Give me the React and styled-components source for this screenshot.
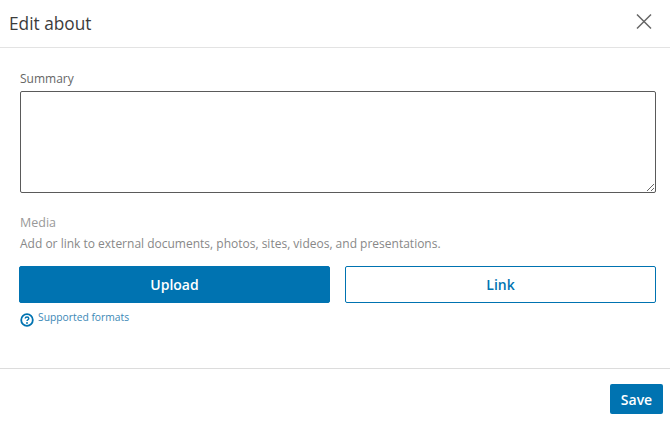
import React from 'react';
import styled, { createGlobalStyle } from 'styled-components';

const GlobalStyle = createGlobalStyle`
html, body {
    margin: 0;
    background: #fff;
    font-family: "Open Sans", "Noto Sans", sans-serif;
}
* {
    box-sizing: border-box;
}
`;

const Modal = styled.div`
width: 670px;
height: 425px;
background: #fff;
display: flex;
flex-direction: column;
overflow: hidden;
`;

const Header = styled.header`
height: 48px;
padding: 0 14px 0 9px;
display: flex;
align-items: center;
justify-content: space-between;
border-bottom: 1px solid #e3e3e3;
`;

const Title = styled.h2`
margin: 0;
font-size: 17.3px;
font-weight: 400;
color: #3c3c3c;
`;

const CloseButton = styled.button`
padding: 0;
width: 24px;
height: 24px;
border: none;
background: none;
color: #666;
margin-top: -3px;
`;

const Body = styled.div`
height: 321px;
padding: 22px 14px 0 20px;
border-bottom: 1px solid #dcdcdc;
`;

const FieldLabel = styled.label`
display: block;
font-size: 12px;
line-height: 17px;
color: #666;
margin-bottom: 4px;
`;

const SummaryInput = styled.textarea`
display: block;
width: 100%;
height: 102px;
border: 1px solid #5a5a5a;
border-radius: 2px;
background: #fff;
margin: 0;
`;

const MediaTitle = styled.div`
margin-top: 21px;
font-size: 12.5px;
line-height: 18px;
color: #999;
`;

const MediaHint = styled.div`
margin-top: 3px;
font-size: 12px;
line-height: 17px;
color: #888;
`;

const ButtonRow = styled.div`
display: grid;
grid-template-columns: 311px 311px;
justify-content: space-between;
margin: 14px 0 0 -1px;
`;

const MediaButton = styled.button`
height: 37px;
border-radius: 2px;
border: 1px solid #0073b1;
background: ${props => props.primary ? '#0073b1' : '#fff'};
color: ${props => props.primary ? '#fff' : '#0073b1'};
font-family: inherit;
font-size: 14px;
font-weight: 600;
`;

const FormatsLink = styled.a`
display: flex;
align-items: flex-start;
gap: 4px;
margin-top: 6px;
font-size: 10.3px;
line-height: 16px;
color: #3c88b6;
`;

const HelpIcon = styled.svg`
width: 14px;
height: 14px;
margin-top: 4px;
flex: none;
`;

const Footer = styled.footer`
flex: 1;
display: flex;
justify-content: flex-end;
align-items: flex-start;
padding: 15px 7px 0 0;
`;

const SaveButton = styled.button`
width: 53px;
height: 30px;
padding: 0;
border: none;
border-radius: 2px;
background: #0073b1;
color: #fff;
font-family: inherit;
font-size: 14px;
font-weight: 600;
`;

function App() {
    return (
        <Modal>
            <GlobalStyle />
            <Header>
                <Title>Edit about</Title>
                <CloseButton aria-label="Close">
                    <svg width="24" height="24" viewBox="0 0 24 24" fill="none" stroke="currentColor" strokeWidth="1.5">
                        <path d="M5 4.5 19 18.5M19 4.5 5 18.5" />
                    </svg>
                </CloseButton>
            </Header>
            <Body>
                <FieldLabel>Summary</FieldLabel>
                <SummaryInput />
                <MediaTitle>Media</MediaTitle>
                <MediaHint>Add or link to external documents, photos, sites, videos, and presentations.</MediaHint>
                <ButtonRow>
                    <MediaButton primary>Upload</MediaButton>
                    <MediaButton>Link</MediaButton>
                </ButtonRow>
                <FormatsLink>
                    <HelpIcon viewBox="0 0 14 14" fill="none">
                        <circle cx="7" cy="7" r="5.8" stroke="#0073b1" strokeWidth="1.8" />
                        <path d="M5.2 5.6C5.2 4.5 6 4 7 4s1.8.6 1.8 1.5c0 1.3-1.8 1.3-1.8 2.6" stroke="#0073b1" strokeWidth="1.4" />
                        <circle cx="7" cy="10" r=".9" fill="#0073b1" />
                    </HelpIcon>
                    Supported formats
                </FormatsLink>
            </Body>
            <Footer>
                <SaveButton>Save</SaveButton>
            </Footer>
        </Modal>
    );
}

export default App;
